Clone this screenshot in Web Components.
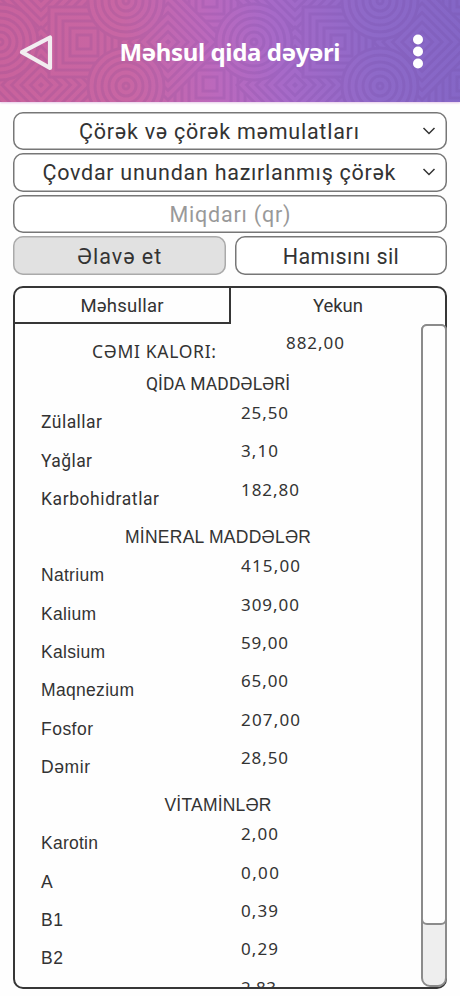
<!DOCTYPE html>
<html lang="az"><head><meta charset="utf-8"><title>Məhsul qida dəyəri</title>
<style>
html,body{margin:0;background:#fefefe}
body{width:460px;height:996px;overflow:hidden;color:#333;font-family:"Noto Sans","Liberation Sans",sans-serif}
</style></head><body>
<nutrition-app></nutrition-app>
<script>
const attach=(el,html)=>{el.attachShadow({mode:'open'}).innerHTML=html;return el.shadowRoot};

/* A single line of text whose tracking is set so that it spans the width in "w". */
customElements.define('fit-text',class extends HTMLElement{
  connectedCallback(){
    if(this.shadowRoot)return;
    const root=attach(this,`<style>:host{display:block;white-space:nowrap;width:max-content;flex:none}span{display:inline-block}</style><span><slot></slot></span>`);
    const s=root.querySelector('span'),n=[...this.textContent].length,w=+this.getAttribute('w')+1;
    if(n<2)return;
    let ls=.01;
    for(let i=0;i<3;i++){
      s.style.letterSpacing=ls+'px';
      ls+=(w+ls-s.getBoundingClientRect().width)/(n-1);
    }
    s.style.letterSpacing=ls+'px';s.style.marginRight=-ls+'px';
  }
});

customElements.define('app-header',class extends HTMLElement{
  connectedCallback(){
    let p='';
    const sq=(x,y)=>{for(let r=35;r>0;r-=7)p+=`<rect x="${x-r}" y="${y-r}" width="${2*r}" height="${2*r}"/>`};
    const ci=(x,y)=>{for(let r=38;r>0;r-=7)p+=`<circle cx="${x}" cy="${y}" r="${r}"/>`};
    const di=(x,y)=>{for(let r=58;r>0;r-=9.5)p+=`<path d="M${x-r} ${y}L${x} ${y-r}L${x+r} ${y}L${x} ${y+r}Z"/>`};
    const each=f=>{for(let k=-1;k<3;k++)f(k*254)};
    each(o=>{sq(o+210,0);sq(o+210,84)});
    each(o=>{di(o+168,42);di(o+41,0);di(o+41,85)});
    each(o=>{sq(o+84,42)});
    each(o=>{ci(o,42);ci(o+126,1);ci(o+126,86)});
    attach(this,`<style>
      :host{display:grid;grid-template-columns:70px 1fr 70px;height:102px;align-items:center;position:relative;overflow:hidden;
        background:linear-gradient(82deg,#c9629c 0%,#c866a4 28%,#bb69bd 46%,#a76ac8 60%,#8e69c8 80%,#8466c6 100%);box-shadow:0 1px 2px #e6c8e8}
      .bg{position:absolute;inset:0}
      .back{position:relative;margin-left:18px}
      .more{position:relative;justify-self:center;margin-right:14px}
      fit-text{position:relative;justify-self:center;font-size:24px;font-weight:700;color:#fff;line-height:34px;margin-top:1px}
    </style>
    <svg class="bg" width="460" height="102"><mask id="m"><g fill="#000" stroke="#fff" stroke-width="3">${p}</g></mask><rect width="460" height="102" fill="#663a8c" opacity=".13" mask="url(#m)"/></svg>
    <svg class="back" width="36" height="40" viewBox="0 0 36 40"><path d="M4 21.200L32 6.500V37Z" fill="none" stroke="#f2eef1" stroke-width="4.200" stroke-linejoin="round"/></svg>
    <fit-text w="220">${this.getAttribute('heading')}</fit-text>
    <svg class="more" width="12" height="36" viewBox="0 0 12 36" fill="#fff"><circle cx="6" cy="6.500" r="5"/><circle cx="6" cy="18.500" r="5"/><circle cx="6" cy="30.500" r="5"/></svg>`);
  }
});

customElements.define('form-box',class extends HTMLElement{
  connectedCallback(){
    const arrow=this.hasAttribute('select')?'<svg width="14" height="10" viewBox="0 0 14 10"><path d="M1.500 2L7 7.500L12.500 2" fill="none" stroke="#333" stroke-width="1.500"/></svg>':'';
    attach(this,`<style>
      :host{display:grid;grid-template-columns:1fr auto 1fr;align-items:center;box-sizing:border-box;height:38.300px;border-radius:10px;background:#fff;
        box-shadow:inset 0 0 0 1.500px #777;font-family:Roboto,"Noto Sans",sans-serif;font-size:21.500px;line-height:30px;min-width:0}
      :host([off]){background:#e1e1e1;box-shadow:inset 0 0 0 1.500px #aaa}
      :host([hint]){color:#999}
      slot{display:block;grid-column:2;padding-top:2px}
      :host([select]) slot{margin-left:-22px}
      svg{justify-self:end;margin-right:11px}
    </style><slot></slot>${arrow}`);
  }
});

customElements.define('food-row',class extends HTMLElement{
  connectedCallback(){
    const a=n=>this.getAttribute(n);
    const lab=a('label')?`<fit-text class="l" w="${a('lw')}">${a('label')}</fit-text>`:'<span></span>';
    attach(this,`<style>
      :host{display:grid;grid-template-columns:200px auto;justify-content:start;align-items:start;height:38.330px;padding-left:26px;font-size:17px;line-height:20px}
      :host([total]){height:32px;grid-template-columns:194px auto;padding-left:77px}
      :host([heading]){grid-template-columns:auto;justify-content:center;padding:0}
      .l{margin-top:9.500px;font-family:Roboto,"Noto Sans",sans-serif;font-size:17.500px}
      :host([arial]) .l{font-family:"Liberation Sans",sans-serif;margin-top:9px;font-size:17.500px}
      :host([total]) .l{font-family:"Noto Sans",sans-serif;font-size:17.500px;margin-top:8.500px}
    </style>${lab}${a('value')?`<fit-text w="${a('vw')}">${a('value')}</fit-text>`:''}`);
  }
});

customElements.define('scroll-track',class extends HTMLElement{
  connectedCallback(){attach(this,`<style>
    :host{display:block;box-sizing:border-box;width:26px;background:#eee;border:2px solid #8b8b8b;border-radius:6px 6px 9px 9px}
    i{display:block;box-sizing:border-box;height:601px;margin:-2px;background:#fefefe;border:2px solid #8b8b8b;border-radius:6px}
  </style><i></i>`)}
});

customElements.define('result-panel',class extends HTMLElement{
  connectedCallback(){attach(this,`<style>
    :host{display:flex;flex-direction:column;box-sizing:border-box;height:703px;border:2px solid #363636;border-radius:10px}
    nav{display:grid;grid-template-columns:216px 1fr;height:36px;font-family:Roboto,"Noto Sans",sans-serif;font-size:18.500px;line-height:24px;flex:none}
    nav div{display:flex;justify-content:center;align-items:flex-start;box-sizing:border-box;padding-top:6px}
    .a{border-right:2px solid #363636;border-bottom:2px solid #363636}
    section{display:flex;flex:1;min-height:0}
    .list{width:407px;overflow:hidden;padding-top:8.600px;box-sizing:border-box}
    scroll-track{margin-right:-2px;flex:none;margin-left:auto}
  </style><nav><div class="a"><fit-text w="82">Məhsullar</fit-text></div><div><fit-text w="49">Yekun</fit-text></div></nav>
  <section><div class="list"><slot></slot></div><scroll-track></scroll-track></section>`)}
});

customElements.define('nutrition-app',class extends HTMLElement{
  connectedCallback(){attach(this,`<style>
    :host{display:block}
    main{padding:9.700px 13px 0}
    form{display:flex;flex-direction:column;gap:3.300px;margin-bottom:11.200px}
    .pair{display:grid;grid-template-columns:1fr 1fr;gap:9px}
  </style>
  <app-header heading="Məhsul qida dəyəri"></app-header>
  <main><form>
    <form-box select><fit-text w="279">Çörək və çörək məmulatları</fit-text></form-box>
    <form-box select><fit-text w="352">Çovdar unundan hazırlanmış çörək</fit-text></form-box>
    <form-box hint><fit-text w="120">Miqdarı (qr)</fit-text></form-box>
    <div class="pair"><form-box off><fit-text w="83">Əlavə et</fit-text></form-box><form-box><fit-text w="115">Hamısını sil</fit-text></form-box></div>
  </form>
  <result-panel>
    <food-row total label="CƏMI KALORI:" lw="123" value="882,00" vw="57"></food-row>
    <food-row heading label="QİDA MADDƏLƏRİ" lw="143"></food-row>
    <food-row label="Zülallar" lw="60" value="25,50" vw="46"></food-row>
    <food-row label="Yağlar" lw="50" value="3,10" vw="36"></food-row>
    <food-row label="Karbohidratlar" lw="117" value="182,80" vw="57"></food-row>
    <food-row heading arial label="MİNERAL MADDƏLƏR" lw="185"></food-row>
    <food-row arial label="Natrium" lw="62" value="415,00" vw="58"></food-row>
    <food-row arial label="Kalium" lw="54" value="309,00" vw="57"></food-row>
    <food-row arial label="Kalsium" lw="63" value="59,00" vw="46"></food-row>
    <food-row arial label="Maqnezium" lw="92" value="65,00" vw="46"></food-row>
    <food-row arial label="Fosfor" lw="51" value="207,00" vw="58"></food-row>
    <food-row arial label="Dəmir" lw="48" value="28,50" vw="46"></food-row>
    <food-row heading arial label="VİTAMİNLƏR" lw="106"></food-row>
    <food-row arial label="Karotin" lw="56" value="2,00" vw="36"></food-row>
    <food-row arial label="A" lw="12" value="0,00" vw="37"></food-row>
    <food-row arial label="B1" lw="21" value="0,39" vw="36"></food-row>
    <food-row arial label="B2" lw="21" value="0,29" vw="36"></food-row>
    <food-row value="2,83" vw="34"></food-row>
  </result-panel></main>`)}
});
</script></body></html>
